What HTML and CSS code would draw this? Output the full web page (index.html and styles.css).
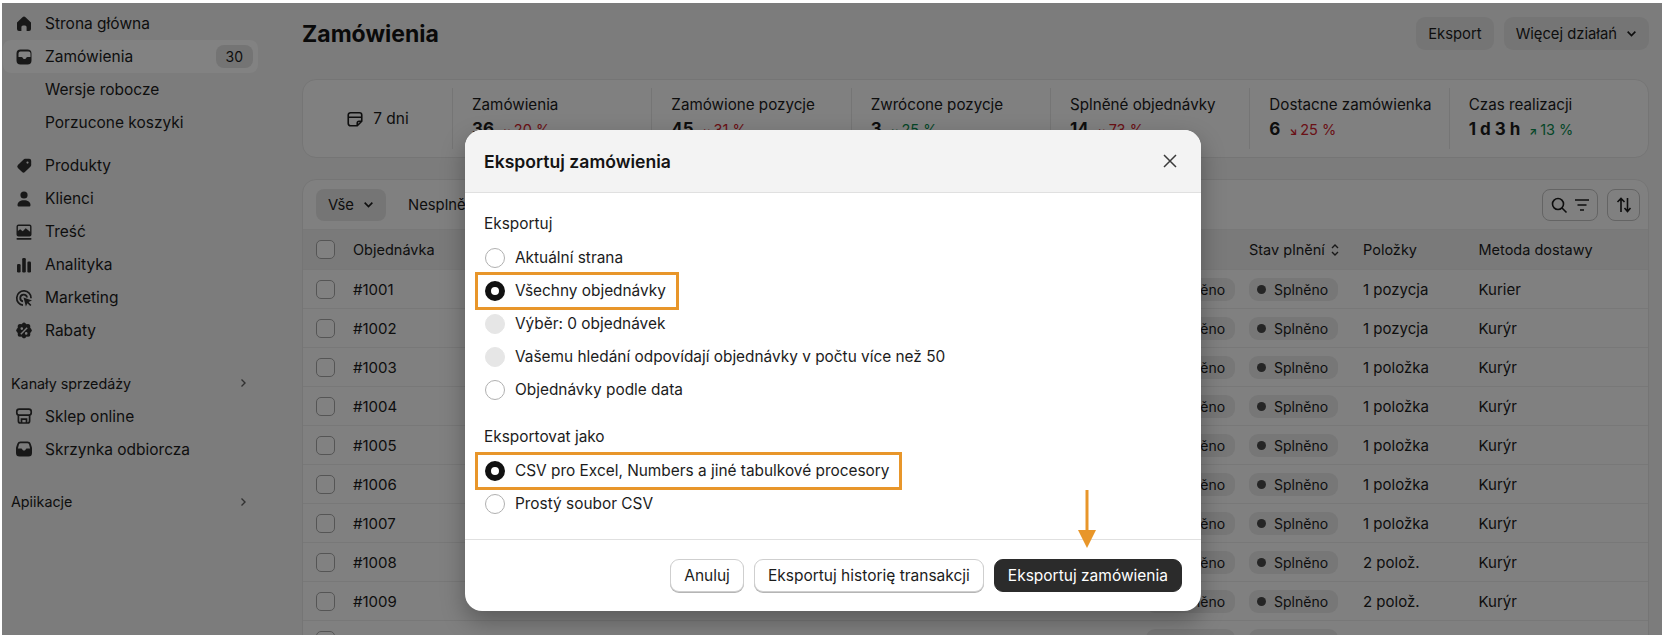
FILE: index.html
```html
<!DOCTYPE html>
<html lang="pl">
<head>
<meta charset="utf-8">
<title>Zamówienia</title>
<link rel="stylesheet" href="styles.css">
</head>
<body>

<div class="frame">
	<!-- lewe menu -->
	<nav class="side">
		<a class="nav"><svg class="ico" viewBox="0 0 20 20"><path d="M3 8.600 8.500 3.300a2.200 2.200 0 0 1 3 0L17 8.600V15a2 2 0 0 1-2 2h-2.400v-4a1.600 1.600 0 0 0-1.600-1.600H9A1.600 1.600 0 0 0 7.400 13v4H5a2 2 0 0 1-2-2z"/></svg>Strona główna</a>
		<a class="nav active"><svg class="ico" viewBox="0 0 20 20"><path fill-rule="evenodd" d="M6.500 2.500h7a4 4 0 0 1 4 4v7a4 4 0 0 1-4 4h-7a4 4 0 0 1-4-4v-7a4 4 0 0 1 4-4zm0 2a2 2 0 0 0-2 2V10h3c.6 0 1 .3 1.200.8.3.8 1 1.200 1.800 1.200s1.500-.4 1.800-1.200c.2-.5.6-.8 1.200-.8h3V6.500a2 2 0 0 0-2-2z"/></svg>Zamówienia<span class="count">30</span></a>
		<a class="nav">
			<span class="ico"></span>Wersje robocze</a>
		<a class="nav">
			<span class="ico"></span>Porzucone koszyki</a>

		<a class="nav first"><svg class="ico" viewBox="0 0 20 20"><path fill-rule="evenodd" d="M11 2.800h4.200a2 2 0 0 1 2 2V9a2 2 0 0 1-.6 1.400l-5.700 5.700a2 2 0 0 1-2.800 0l-4.200-4.200a2 2 0 0 1 0-2.800l5.700-5.700A2 2 0 0 1 11 2.800zm2.500 2.700a1 1 0 1 0 0 2.200 1 1 0 0 0 0-2.200z"/></svg>Produkty</a>
		<a class="nav"><svg class="ico" viewBox="0 0 20 20"><circle cx="10" cy="6" r="3.600"/><path d="M3.500 16c0-3 2.700-4.800 6.500-4.800s6.500 1.800 6.500 4.800c0 1-.7 1.500-1.500 1.500H5c-.8 0-1.500-.5-1.500-1.500z"/></svg>Klienci</a>
		<a class="nav"><svg class="ico" viewBox="0 0 20 20"><path fill-rule="evenodd" d="M4.500 2.500h11a2 2 0 0 1 2 2v8a2 2 0 0 1-2 2h-11a2 2 0 0 1-2-2v-8a2 2 0 0 1 2-2zm0 1.500a.6.6 0 0 0-.6.600V9l2.200-1.800 2.600 2 3-3 4.400 3.600V4.600a.6.6 0 0 0-.6-.6z"/><rect x="2.500" y="16" width="15" height="1.700" rx=".8"/></svg>Treść</a>
		<a class="nav"><svg class="ico" viewBox="0 0 20 20"><rect x="3" y="9" width="3.600" height="8.500" rx="1.200"/><rect x="8.200" y="3" width="3.600" height="14.500" rx="1.200"/><rect x="13.400" y="6.500" width="3.600" height="11" rx="1.200"/></svg>Analityka</a>
		<a class="nav"><svg class="ico" viewBox="0 0 20 20"><path d="M9 18a8 8 0 1 1 8.900-7.800h-1.700A6.300 6.300 0 1 0 9 16.300z"/><path d="M8.900 14.200a4.300 4.300 0 1 1 5-4.800h-1.800a2.500 2.500 0 1 0-3 3z"/><path d="M9.500 9.500 18 12.500l-3.400 1.600 2.800 2.800-1.200 1.200-2.800-2.800-1.500 3.300z"/></svg>Marketing</a>
		<a class="nav"><svg class="ico" viewBox="0 0 20 20"><path fill-rule="evenodd" d="M8.300 2.400a2.400 2.400 0 0 1 3.400 0l.9.800 1.200-.1a2.400 2.400 0 0 1 2.500 2.500l-.1 1.200.9.900a2.400 2.400 0 0 1 0 3.400l-.9.900.1 1.200a2.400 2.400 0 0 1-2.500 2.500l-1.200-.1-.9.900a2.400 2.400 0 0 1-3.400 0l-.9-.9-1.200.1a2.400 2.400 0 0 1-2.500-2.500l.1-1.200-.9-.9a2.400 2.400 0 0 1 0-3.400l.9-.9-.1-1.200a2.400 2.400 0 0 1 2.500-2.500l1.200.1zM12.700 6.300 6.300 12.700l1 1 6.400-6.400zM7.800 6.300a1.300 1.300 0 1 0 0 2.600 1.300 1.300 0 0 0 0-2.600zm4.400 4.800a1.300 1.300 0 1 0 0 2.600 1.300 1.300 0 0 0 0-2.600z"/></svg>Rabaty</a>

		<div class="section">Kanały sprzedáży<svg class="chev" viewBox="0 0 10 10"><path d="M3.500 1.500 7 5 3.500 8.500"/></svg></div>
		<a class="nav"><svg class="ico line" viewBox="0 0 20 20"><rect x="2.800" y="3.200" width="14.400" height="6" rx="2.400"/><path d="M4.400 9.200V15a2 2 0 0 0 2 2h7.200a2 2 0 0 0 2-2V9.200M7.500 16.800v-3.600h5v3.600"/></svg>Sklep online</a>
		<a class="nav"><svg class="ico" viewBox="0 0 20 20"><path fill-rule="evenodd" d="M6.500 2.500h7c1.500 0 2.700.9 3.200 2.200l1 3c.2.500.3 1 .3 1.500V14a3.500 3.500 0 0 1-3.500 3.500h-9A3.500 3.500 0 0 1 2 14V9.200c0-.5.100-1 .3-1.500l1-3a3.400 3.400 0 0 1 3.200-2.200zm0 1.800c-.7 0-1.300.4-1.500 1L3.900 9.500h3.300c.5 0 .9.300 1 .7.300.8 1 1.300 1.800 1.300s1.500-.5 1.800-1.300c.1-.4.500-.7 1-.7h3.300L15 5.300c-.2-.6-.8-1-1.500-1z"/></svg>Skrzynka odbiorcza</a>

		<div class="section">Apiikacje<svg class="chev" viewBox="0 0 10 10"><path d="M3.500 1.500 7 5 3.500 8.500"/></svg></div>
	</nav>

	<div class="main">
		<header class="top">
			<h1>Zamówienia</h1>
			<div class="top_btns">
				<span class="ghost">Eksport</span>
				<span class="ghost">Więcej działań<svg class="down" viewBox="0 0 10 10"><path d="M1.500 3.300 5 6.800l3.500-3.500"/></svg></span>
			</div>
		</header>

		<section class="stats">
			<div class="period"><svg class="cal" viewBox="0 0 20 20"><path d="M5 3h10a2.500 2.500 0 0 1 2.500 2.500v7L12.500 17.500H5A2.500 2.500 0 0 1 2.500 15V5.500A2.500 2.500 0 0 1 5 3zM2.500 8h15M12.500 17.500V14.500a2 2 0 0 1 2-2h3"/></svg>7 dni</div>
			<div class="stat"><div>Zamówienia</div><div class="val">36<span class="delta bad"><i>↘</i>20 %</span></div></div>
			<div class="stat"><div>Zamówione pozycje</div><div class="val">45<span class="delta bad"><i>↘</i>31 %</span></div></div>
			<div class="stat"><div>Zwrócone pozycje</div><div class="val">3<span class="delta good"><i>↘</i>25 %</span></div></div>
			<div class="stat"><div>Splněné objednávky</div><div class="val">14<span class="delta bad"><i>↘</i>73 %</span></div></div>
			<div class="stat"><div>Dostacne zamówienka</div><div class="val">6<span class="delta bad"><i>↘</i>25 %</span></div></div>
			<div class="stat"><div>Czas realizacji</div><div class="val">1 d 3 h<span class="delta good"><i>↗</i>13 %</span></div></div>
		</section>

		<section class="orders">
			<div class="tabs">
				<span class="tab on">Vše<svg class="down" viewBox="0 0 10 10"><path d="M1.500 3.300 5 6.800l3.500-3.500"/></svg></span>
				<span class="tab">Nesplněné</span>
				<div class="tools">
					<span class="tool wide">
						<svg viewBox="0 0 20 20"><circle cx="9" cy="9" r="5.500"/><path d="m13 13 4.500 4.500"/></svg>
						<svg viewBox="0 0 20 20"><path d="M3 5h14M5.500 10h9M8 15h4"/></svg>
					</span>
					<span class="tool">
						<svg viewBox="0 0 20 20"><path d="M7 17V3.500M3.500 7 7 3.500 10.500 7M13.500 3v13.500M10.500 13l3 3.500 3-3.500"/></svg>
					</span>
				</div>
			</div>
			<div class="row head"><span class="box"></span><span>Objednávka</span><span></span><span class="sort_col">Stav plnění<svg class="updown" viewBox="0 0 10 14"><path d="M2 5 5 2l3 3M2 9l3 3 3-3"/></svg></span><span>Položky</span><span>Metoda dostawy</span></div>
			<div class="row"><span class="box"></span><span>#1001</span><span class="pill"><b></b>Splněno</span><span class="pill"><b></b>Splněno</span><span>1 pozycja</span><span>Kurier</span></div>
			<div class="row"><span class="box"></span><span>#1002</span><span class="pill"><b></b>Splněno</span><span class="pill"><b></b>Splněno</span><span>1 pozycja</span><span>Kurýr</span></div>
			<div class="row"><span class="box"></span><span>#1003</span><span class="pill"><b></b>Splněno</span><span class="pill"><b></b>Splněno</span><span>1 položka</span><span>Kurýr</span></div>
			<div class="row"><span class="box"></span><span>#1004</span><span class="pill"><b></b>Splněno</span><span class="pill"><b></b>Splněno</span><span>1 položka</span><span>Kurýr</span></div>
			<div class="row"><span class="box"></span><span>#1005</span><span class="pill"><b></b>Splněno</span><span class="pill"><b></b>Splněno</span><span>1 položka</span><span>Kurýr</span></div>
			<div class="row"><span class="box"></span><span>#1006</span><span class="pill"><b></b>Splněno</span><span class="pill"><b></b>Splněno</span><span>1 položka</span><span>Kurýr</span></div>
			<div class="row"><span class="box"></span><span>#1007</span><span class="pill"><b></b>Splněno</span><span class="pill"><b></b>Splněno</span><span>1 položka</span><span>Kurýr</span></div>
			<div class="row"><span class="box"></span><span>#1008</span><span class="pill"><b></b>Splněno</span><span class="pill"><b></b>Splněno</span><span>2 polož.</span><span>Kurýr</span></div>
			<div class="row"><span class="box"></span><span>#1009</span><span class="pill"><b></b>Splněno</span><span class="pill"><b></b>Splněno</span><span>2 polož.</span><span>Kurýr</span></div>
			<!-- ten wiersz ucina dolna krawedz -->
			<div class="row"><span class="box"></span><span></span><span class="pill"></span><span class="pill"></span></div>
		</section>
	</div>

	<!-- przyciemnienie i okno eksportu -->
	<div class="overlay">
		<div class="modal">
			<div class="modal_head">
				<h2>Eksportuj zamówienia</h2>
				<svg class="close" viewBox="0 0 14 14"><path d="m1 1 12 12M13 1 1 13"/></svg>
			</div>
			<div class="modal_body">
				<div class="label">Eksportuj</div>
				<div class="opt"><span class="radio"></span>Aktuální strana</div>
				<div class="opt mark"><span class="radio on"></span>Všechny objednávky</div>
				<div class="opt"><span class="radio off"></span>Výběr: 0 objednávek</div>
				<div class="opt"><span class="radio off"></span>Vašemu hledání odpovídají objednávky v počtu více než 50</div>
				<div class="opt"><span class="radio"></span>Objednávky podle data</div>
				<div class="label second">Eksportovat jako</div>
				<div class="opt mark"><span class="radio on"></span>CSV pro Excel, Numbers a jiné tabulkové procesory</div>
				<div class="opt"><span class="radio"></span>Prostý soubor CSV</div>
			</div>
			<div class="modal_foot">
				<span class="btn">Anuluj</span>
				<span class="btn">Eksportuj historię transakcji</span>
				<span class="btn dark">Eksportuj zamówienia</span>
			</div>
			<svg class="arrow" viewBox="0 0 20 58"><path d="M8.500 0h3v42h-3z"/><path d="M1 40h18L10 58z"/></svg>
		</div>
	</div>
</div>

</body>
</html>
```

FILE: styles.css
```css
* {
	box-sizing: border-box;
}
html, body {
	margin: 0;
	height: 100%;
	background: #fff;
	overflow: hidden;
	font-family: Inter, "Noto Sans", sans-serif;
	font-size: 15.2px;
	color: #1c1c1c;
}
h1, h2 {
	margin: 0;
}

.frame {
	position: relative;
	display: flex;
	width: 1660px;
	height: 632px;
	margin: 3px 0 0 2px;
	background: #f3f3f3;
	overflow: hidden;
}

/* menu */
.side {
	flex: none;
	width: 300px;
	padding: 4px 0 0 1px;
}
.nav {
	display: flex;
	align-items: center;
	width: 255px;
	height: 33px;
	padding: 0 5px 0 11px;
	font-size: 15.5px;
	border-radius: 8px;
}
.nav.first {
	margin-top: 10px;
}
.nav.active {
	background: #fff;
}
.ico {
	flex: none;
	width: 20px;
	height: 20px;
	margin-right: 11px;
	fill: #303030;
}
.ico.line {
	fill: none;
	stroke: #303030;
	stroke-width: 1.700;
}
.count {
	margin-left: auto;
	padding: 0 10px;
	height: 23px;
	line-height: 23px;
	font-size: 14px;
	background: #e3e3e3;
	border-radius: 8px;
}
.section {
	display: flex;
	align-items: center;
	justify-content: space-between;
	width: 253px;
	height: 33px;
	margin-top: 19.500px;
	padding: 0 8px;
	font-size: 14.300px;
}
.chev {
	width: 10px;
	height: 10px;
	fill: none;
	stroke: #616161;
	stroke-width: 1.400;
}

/* glowna czesc */
.main {
	flex: none;
	width: 1347px;
}
.top {
	display: flex;
	align-items: center;
	justify-content: space-between;
	height: 47px;
	padding-top: 14px;
	margin-bottom: 29px;
}
h1 {
	font-size: 23px;
	font-weight: 700;
	color: #141414;
}
.top_btns {
	display: flex;
	gap: 10px;
}
.ghost {
	display: flex;
	align-items: center;
	height: 33px;
	padding: 0 12px;
	font-size: 14.800px;
	font-weight: 400;
	background: #e6e6e6;
	border-radius: 9px;
}
.down {
	width: 11px;
	height: 11px;
	margin-left: 9px;
	fill: none;
	stroke: #1c1c1c;
	stroke-width: 1.500;
}

.stats {
	display: grid;
	grid-template-columns: 149px repeat(6, 1fr);
	height: 79px;
	background: #fbfbfb;
	border: 1px solid #e6e6e6;
	border-radius: 14px;
	margin-bottom: 21px;
}
.period {
	display: flex;
	align-items: center;
	justify-content: center;
	font-size: 15.500px;
}
.cal {
	width: 18px;
	height: 18px;
	margin-right: 9px;
	fill: none;
	stroke: #1c1c1c;
	stroke-width: 1.800;
}
.stat {
	margin: 8px 0;
	padding: 7px 0 0 19px;
	border-left: 1px solid #e6e6e6;
	line-height: 20px;
}
.val {
	display: flex;
	align-items: baseline;
	font-size: 17px;
	font-weight: 700;
	line-height: 28px;
}
.delta {
	margin-left: 9px;
	font-size: 14.500px;
	font-weight: 400;
}
.delta i {
	font-style: normal;
	font-size: 10px;
	font-weight: 700;
	margin-right: 3px;
}
.bad {
	color: #d0222c;
}
.good {
	color: #0a8a4e;
}

.orders {
	background: #fbfbfb;
	border: 1px solid #e6e6e6;
	border-radius: 14px 14px 0 0;
	height: 480px;
}
.tabs {
	display: flex;
	align-items: center;
	height: 49px;
	padding: 0 8px 0 13px;
}
.tab {
	display: flex;
	align-items: center;
	height: 32px;
	padding: 0 12px;
	margin-right: 10px;
	font-size: 14.800px;
	font-weight: 400;
	border-radius: 8px;
}
.tab.on {
	background: #e6e6e6;
}
.tools {
	display: flex;
	gap: 9px;
	margin-left: auto;
}
.tool {
	display: flex;
	align-items: center;
	justify-content: center;
	gap: 3px;
	width: 33px;
	height: 32px;
	border: 1px solid #c4c4c4;
	border-radius: 8px;
}
.tool.wide {
	width: 56px;
}
.tool svg {
	width: 20px;
	height: 20px;
	fill: none;
	stroke: #1c1c1c;
	stroke-width: 1.600;
}

.row {
	display: grid;
	grid-template-columns: 37px 793px 103px 114px 115.500px 1fr;
	align-items: center;
	height: 39px;
	padding-left: 13px;
	border-top: 1px solid #ebebeb;
	font-size: 15px;
}
.row.head {
	height: 40px;
	font-size: 14.500px;
	background: #efefef;
}
.box {
	width: 19px;
	height: 19px;
	background: #fdfdfd;
	border: 1px solid #a8a8a8;
	border-radius: 5px;
}
.sort_col {
	display: flex;
	align-items: center;
}
.updown {
	width: 10px;
	height: 14px;
	margin-left: 5px;
	fill: none;
	stroke: #303030;
	stroke-width: 1.400;
}
.pill {
	display: inline-flex;
	align-items: center;
	justify-self: start;
	width: 89px;
	height: 23px;
	padding-left: 8px;
	font-size: 14px;
	background: #e9e9e9;
	border-radius: 9px;
}
.pill b {
	width: 9px;
	height: 9px;
	margin-right: 8px;
	background: #4a4a4a;
	border-radius: 50%;
}

/* okno eksportu */
.overlay {
	position: absolute;
	top: 0;
	left: 0;
	right: 0;
	bottom: 0;
	display: flex;
	justify-content: center;
	padding: 127px 0 0 2px;
	background: rgba(0, 0, 0, 0.49);
}
.modal {
	position: relative;
	width: 736px;
	height: 481px;
	background: #fff;
	border-radius: 17px;
	box-shadow: 0 10px 24px rgba(0, 0, 0, 0.3);
}
.modal_head {
	display: flex;
	align-items: center;
	justify-content: space-between;
	height: 63px;
	padding: 0 24px 0 19px;
	background: #f3f3f3;
	border-bottom: 1px solid #e0e0e0;
	border-radius: 17px 17px 0 0;
}
h2 {
	font-size: 17.600px;
	font-weight: 600;
	color: #141414;
}
.close {
	width: 14px;
	height: 14px;
	fill: none;
	stroke: #3a3a3a;
	stroke-width: 1.500;
}
.modal_body {
	height: 347px;
	padding: 15px 0 0 19px;
	border-bottom: 1px solid #e0e0e0;
	font-size: 15.400px;
}
.label {
	height: 33px;
	line-height: 32px;
}
.label.second {
	margin-top: 15px;
}
.opt {
	display: flex;
	align-items: center;
	width: fit-content;
	height: 33px;
}
.opt.mark {
	height: 32px;
	margin: 0.5px 0 0.5px -6px;
	padding: 0 10px 0 6px;
	outline: 3px solid #e8962a;
}
.radio {
	flex: none;
	width: 20px;
	height: 20px;
	margin: 0 10px 0 1px;
	background: #fff;
	border: 1px solid #b0b0b0;
	border-radius: 50%;
}
.radio.on {
	border: 6px solid #111;
}
.radio.off {
	background: #e6e6e6;
	border-color: #e6e6e6;
}
.modal_foot {
	display: flex;
	justify-content: flex-end;
	gap: 10px;
	padding: 19px 19px 0 0;
}
.btn {
	display: flex;
	align-items: center;
	height: 33px;
	padding: 0 13px;
	font-size: 15.500px;
	font-weight: 400;
	background: #fff;
	border: 1px solid #cfcfcf;
	border-radius: 9px;
	box-shadow: 0 1px 0 #b5b5b5;
}
.btn.dark {
	color: #fff;
	background: #2b2b2b;
	border-color: #2b2b2b;
	box-shadow: none;
}
/* strzalka nad przyciskiem */
.arrow {
	position: absolute;
	top: 360px;
	left: 612px;
	width: 20px;
	height: 58px;
	fill: #e8962a;
}
```
